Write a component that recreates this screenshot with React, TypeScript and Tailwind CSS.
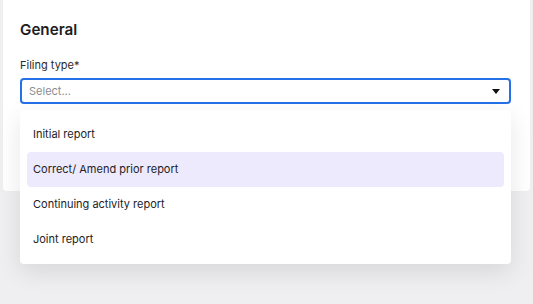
export default function App() {
  const items = ["Initial report", "Correct/ Amend prior report", "Continuing activity report", "Joint report"];
  return (
    <div className="relative w-[533px] h-[304px] bg-[#efeff2] overflow-hidden" style={{ fontFamily: "Inter, 'Noto Sans', sans-serif" }}>
      <div className="ml-[3px] mr-[3px] h-[191px] bg-white rounded-b-[4px] pl-[17px] pr-[19px] pt-[20px]">
        <h2 className="text-[15.2px] leading-[20px] font-semibold text-[#1d1d1f]">General</h2>
        <div className="mt-[17px] text-[11px] leading-[16px] text-[#2a2a2e]">Filing type*</div>
        <div className="mt-[5px] h-[26px] border-2 border-[#2670e8] rounded-[4px] flex items-center justify-between pl-[7px] pr-[9px]">
          <span className="text-[11px] text-[#8c8c90]">Select...</span>
          <svg width="8" height="5" viewBox="0 0 8 5"><path d="M0 0h8L4 5z" fill="#111" /></svg>
        </div>
      </div>
      <div className="absolute left-[20px] top-[110px] w-[491px] h-[154px] bg-white rounded-[4px] px-[7px] py-[7px] shadow-[0_8px_24px_rgba(0,0,0,0.10)] flex flex-col">
        {items.map((t, i) => (
          <div
            key={t}
            className={
              i === 1
                ? "h-[35px] flex items-center pl-[6px] rounded-[4px] bg-[#eeeafd] text-[11px] text-[#222226]"
                : "h-[35px] flex items-center pl-[6px] rounded-[4px] text-[11px] text-[#222226]"
            }
          >
            {t}
          </div>
        ))}
      </div>
    </div>
  );
}
